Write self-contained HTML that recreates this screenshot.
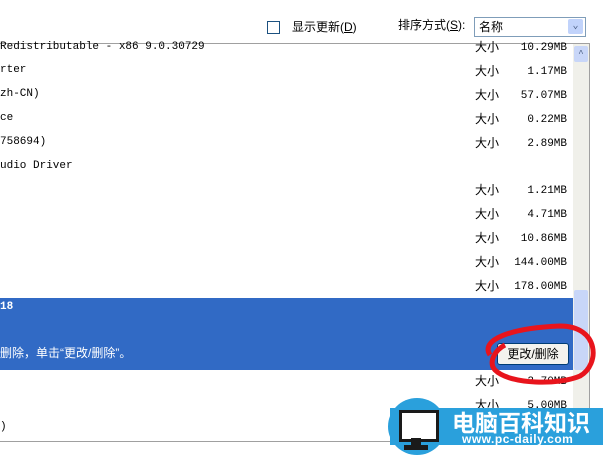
<!DOCTYPE html><html><head><meta charset="utf-8"><style>
body{margin:0;width:603px;height:455px;background:#fff;overflow:hidden;position:relative;font-family:"Liberation Mono","Noto Sans CJK SC",monospace;font-size:11px;line-height:14px;color:#000}
.a{position:absolute;white-space:nowrap}
.cj{font-family:"Liberation Sans","Noto Sans CJK SC",sans-serif;font-size:12px;line-height:14px}
.r{position:absolute;left:475px;width:92px;height:14px}
.r span{position:absolute;right:0;top:1px}
.r span.cj{top:0}
</style></head><body>
<div class="a" style="left:267px;top:21px;width:11px;height:11px;border:1px solid #1c5180;background:#fff"></div>
<div class="a cj" style="left:292px;top:20px">显示更新(<u>D</u>)</div>
<div class="a cj" style="left:398px;top:18px">排序方式(<u>S</u>):</div>
<div class="a" style="left:474px;top:17px;width:110px;height:18px;border:1px solid #7f9db9;background:#fff"></div>
<div class="a cj" style="left:479px;top:20px">名称</div>
<div class="a" style="left:568px;top:19px;width:15px;height:15px;background:#c1d3fb;border-radius:2px;color:#4d6185;font-size:10px;text-align:center;line-height:15px">⌄</div>
<div class="a" style="left:0;top:43px;width:590px;height:1px;background:#a0a0a0"></div>
<div class="a" style="left:589px;top:43px;width:1px;height:400px;background:#a0a0a0"></div>
<div class="a" style="left:573px;top:44px;width:16px;height:398px;background:#f0f0ea"></div>
<div class="a" style="left:574px;top:46px;width:14px;height:16px;background:#c8d6f8;border-radius:2px;color:#4d6185;font-size:9px;text-align:center;line-height:16px">^</div>
<div class="a" style="left:574px;top:290px;width:14px;height:80px;background:#c8d6f8;border-radius:2px"></div>
<div class="a" style="left:0;top:441px;width:590px;height:1px;background:#a0a0a0"></div>
<div class="a" style="left:0;top:40px">Redistributable - x86 9.0.30729</div>
<div class="a" style="left:0;top:63px">rter</div>
<div class="a" style="left:0;top:87px">zh-CN)</div>
<div class="a" style="left:0;top:111px">ce</div>
<div class="a" style="left:0;top:135px">758694)</div>
<div class="a" style="left:0;top:159px">udio Driver</div>
<div class="r a" style="top:40px"><span class="cj" style="left:0">大小</span><span>10.29MB</span></div>
<div class="r a" style="top:64px"><span class="cj" style="left:0">大小</span><span>1.17MB</span></div>
<div class="r a" style="top:88px"><span class="cj" style="left:0">大小</span><span>57.07MB</span></div>
<div class="r a" style="top:112px"><span class="cj" style="left:0">大小</span><span>0.22MB</span></div>
<div class="r a" style="top:136px"><span class="cj" style="left:0">大小</span><span>2.89MB</span></div>
<div class="r a" style="top:183px"><span class="cj" style="left:0">大小</span><span>1.21MB</span></div>
<div class="r a" style="top:207px"><span class="cj" style="left:0">大小</span><span>4.71MB</span></div>
<div class="r a" style="top:231px"><span class="cj" style="left:0">大小</span><span>10.86MB</span></div>
<div class="r a" style="top:255px"><span class="cj" style="left:0">大小</span><span>144.00MB</span></div>
<div class="r a" style="top:279px"><span class="cj" style="left:0">大小</span><span>178.00MB</span></div>
<div class="a" style="left:0;top:298px;width:573px;height:72px;background:#316ac5"></div>
<div class="a" style="left:0;top:300px;color:#fff;font-weight:bold">18</div>
<div class="a cj" style="left:0;top:346px;color:#fff">删除，单击“更改/删除”。</div>
<div class="a cj" style="left:497px;top:343px;width:70px;height:20px;background:#f4f3ee;border:1px solid #003c74;border-radius:3px;text-align:center;line-height:20px">更改/删除</div>
<div class="r a" style="top:374px"><span class="cj" style="left:0">大小</span><span>3.70MB</span></div>
<div class="r a" style="top:398px"><span class="cj" style="left:0">大小</span><span>5.00MB</span></div>
<div class="a" style="left:0;top:420px">)</div>
<svg class="a" style="left:0;top:0" width="603" height="455"><path d="M490 355 C480 340 510 328 560 326 C600 326 600 365 580 376 C560 385 510 385 495 370 C488 362 495 350 505 345" fill="none" stroke="#e8141c" stroke-width="5"/></svg>
<div class="a" style="left:390px;top:408px;width:213px;height:37px;background:#2aa0dc"></div>
<div class="a" style="left:388px;top:398px;width:58px;height:57px;border-radius:50%;background:#2aa0dc"></div>
<div class="a" style="left:399px;top:410px;width:34px;height:26px;background:#fff;border:3px solid #1a1a1a"></div>
<div class="a" style="left:411px;top:438px;width:10px;height:8px;background:#1a1a1a"></div>
<div class="a" style="left:404px;top:445px;width:24px;height:5px;background:#1a1a1a"></div>
<div class="a" style="left:452px;top:408px;color:#fff;font-family:'Noto Sans CJK SC',sans-serif;font-weight:bold;font-size:23px;line-height:26px">电脑百科知识</div>
<div class="a" style="left:462px;top:433px;color:#fff;font-family:'Liberation Sans',sans-serif;font-weight:bold;font-size:12px;line-height:12px;letter-spacing:0.5px">www.pc-daily.com</div>
</body></html>
